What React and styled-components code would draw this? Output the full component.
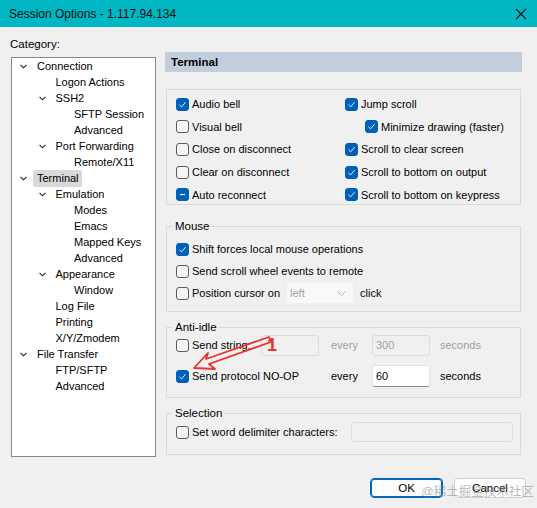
import React from 'react';
import styled, { createGlobalStyle } from 'styled-components';

const Global = createGlobalStyle`
    html, body {
        margin: 0;
        padding: 0;
        background: #f0f0f0;
    }
    * {
        box-sizing: border-box;
    }
`

const Window = styled.div`
    position: relative;
    width: 537px;
    height: 508px;
    display: flex;
    flex-direction: column;
    background: #f0f0f0;
    font-family: "Liberation Sans", Arial, sans-serif;
    font-size: 11px;
    color: #000;
    overflow: hidden;
`
const TitleBar = styled.div`
    height: 27px;
    flex: none;
    display: flex;
    align-items: center;
    justify-content: space-between;
    padding: 0 9px 0 9px;
    background: #00b7c3;
    color: #111;
    font-size: 12px;
`
const CloseX = styled.svg`
    width: 12px;
    height: 12px;
    margin-right: 1px;
`
const Body = styled.div`
    flex: 1;
    display: flex;
    flex-direction: column;
    padding: 9px 0 10px 10px;
`
const Main = styled.div`
    display: flex;
`
const LeftCol = styled.div`
    width: 146px;
    flex: none;
`
const Caption = styled.div`
    height: 16px;
    line-height: 16px;
    font-size: 11.5px;
`
const Tree = styled.div`
    margin: 5px 0 0 1px;
    width: 145px;
    height: 400px;
    background: #fff;
    border: 1px solid #828790;
`
const Node = styled.div`
    height: 16px;
    display: flex;
    align-items: center;
    padding-left: ${p => p.level * 18.5}px;
`
const Twist = styled.span`
    width: 25px;
    flex: none;
    display: flex;
    align-items: center;
    padding-left: 8px;
`
const NodeText = styled.span`
    margin-left: -4px;
    padding: 1px 3px 1px 4px;
    line-height: 15px;
    border-radius: 2px;
    background: ${p => (p.selected ? '#d9d9d9' : 'transparent')};
    white-space: nowrap;
`
const RightCol = styled.div`
    margin: 16px 0 0 9px;
    width: 357px;
    display: flex;
    flex-direction: column;
`
const Header = styled.div`
    height: 20px;
    line-height: 20px;
    padding-left: 6px;
    background: #c2cedb;
    font-weight: bold;
    font-size: 11.5px;
`
const Panel = styled.div`
    margin: 17px 0 0 1px;
    width: 355px;
    height: 116px;
    border: 1px solid #dadada;
    padding: 3px 0 0 9px;
    display: grid;
    grid-template-columns: 169px auto;
    grid-auto-rows: 22.6px;
`
const Group = styled.fieldset`
    margin: ${p => p.top}px 0 0 1px;
    width: 355px;
    border: 1px solid #dadada;
    padding: ${p => p.pad};
    padding-left: 9px;
    min-width: 0;
`
const Legend = styled.legend`
    margin-left: -3px;
    padding: 0 2px;
    line-height: 14px;
    font-size: 11.5px;
`
const Row = styled.div`
    display: flex;
    align-items: center;
    height: ${p => p.h || 22}px;
    padding-left: ${p => p.indent || 0}px;
    color: ${p => (p.dim ? '#a0a0a0' : '#000')};
    white-space: nowrap;
`
const Box = styled.span`
    width: 13px;
    height: 13px;
    flex: none;
    margin-right: 3px;
    border-radius: 3px;
    border: 1px solid ${p => (p.state ? '#005fb8' : '#5b5b5b')};
    background: ${p => (p.state ? '#005fb8' : '#f6f6f6')};
    display: flex;
    align-items: center;
    justify-content: center;
`
const Select = styled.div`
    width: 66px;
    height: 20px;
    margin: 0 7px 0 7px;
    background: #f9f9f9;
    border-radius: 3px;
    display: flex;
    align-items: center;
    justify-content: space-between;
    padding: 0 7px 0 3px;
    color: #a0a0a0;
`
const AntiRow = styled.div`
    display: grid;
    grid-template-columns: 85px 58px 53px 58px auto;
    align-items: center;
    height: 22px;
    margin-bottom: ${p => p.gap || 0}px;
`
const Field = styled.div`
    height: ${p => p.h || 21}px;
    width: ${p => p.w || 58}px;
    border: 1px solid ${p => (p.live ? '#e3e3e3' : '#dcdcdc')};
    border-bottom-color: ${p => (p.live ? '#8a8a8a' : '#dcdcdc')};
    border-radius: 3px;
    background: ${p => (p.live ? '#fff' : '#f0f0f0')};
    color: ${p => (p.live ? '#000' : '#a0a0a0')};
    padding-left: 3px;
    display: flex;
    align-items: center;
`
const Word = styled.span`
    padding-left: ${p => p.pl || 0}px;
    color: ${p => (p.dim ? '#a0a0a0' : '#000')};
    white-space: nowrap;
`
const Footer = styled.div`
    margin-top: auto;
    display: flex;
    justify-content: flex-end;
    gap: 11px;
    padding-right: 11px;
`
const Button = styled.div`
    width: ${p => p.w}px;
    height: 20px;
    border-radius: 4px;
    background: #fdfdfd;
    border: 1px solid ${p => (p.primary ? '#0067c0' : '#d0d0d0')};
    box-shadow: ${p => (p.primary ? 'inset 0 0 0 1px #0067c0' : 'none')};
    display: flex;
    align-items: center;
    justify-content: center;
    font-size: 11.5px;
`
const Watermark = styled.div`
    position: absolute;
    left: 421px;
    top: 481px;
    font-family: "Liberation Sans", "Noto Sans CJK SC", sans-serif;
    font-size: 12.5px;
    color: rgba(130, 130, 130, 0.55);
    white-space: nowrap;
    pointer-events: none;
`
const Mark = styled.svg`
    position: absolute;
    left: 185px;
    top: 328px;
    width: 100px;
    height: 48px;
    overflow: visible;
`

const Chevron = () => (
    <svg width="7" height="5" viewBox="0 0 7 5">
        <path d="M0.5 0.8 L3.5 3.8 L6.5 0.8" fill="none" stroke="#222" strokeWidth="1.1" />
    </svg>
)

const Check = ({ state }) => (
    <Box state={state}>
        {state === 'on' && (
            <svg width="9" height="9" viewBox="0 0 9 9">
                <path d="M1.5 4.8 L3.6 6.8 L7.6 2.2" fill="none" stroke="#fff" strokeWidth="0.9" />
            </svg>
        )}
        {state === 'mixed' && (
            <svg width="9" height="9" viewBox="0 0 9 9">
                <path d="M2 4.5 H7" stroke="#fff" strokeWidth="1.2" />
            </svg>
        )}
    </Box>
)

const tree = [
    [0, 'Connection', true],
    [1, 'Logon Actions'],
    [1, 'SSH2', true],
    [2, 'SFTP Session'],
    [2, 'Advanced'],
    [1, 'Port Forwarding', true],
    [2, 'Remote/X11'],
    [0, 'Terminal', true, true],
    [1, 'Emulation', true],
    [2, 'Modes'],
    [2, 'Emacs'],
    [2, 'Mapped Keys'],
    [2, 'Advanced'],
    [1, 'Appearance', true],
    [2, 'Window'],
    [1, 'Log File'],
    [1, 'Printing'],
    [1, 'X/Y/Zmodem'],
    [0, 'File Transfer', true],
    [1, 'FTP/SFTP'],
    [1, 'Advanced'],
]

const terminalOpts = [
    ['Audio bell', 'on'], ['Jump scroll', 'on'],
    ['Visual bell'], ['Minimize drawing (faster)', 'on', 20],
    ['Close on disconnect'], ['Scroll to clear screen', 'on'],
    ['Clear on disconnect'], ['Scroll to bottom on output', 'on'],
    ['Auto reconnect', 'mixed'], ['Scroll to bottom on keypress', 'on'],
]

const App = () => (
    <Window>
        <Global />
        <TitleBar>
            <span>Session Options - 1.117.94.134</span>
            <CloseX viewBox="0 0 12 12">
                <path d="M1 1 L11 11 M11 1 L1 11" stroke="#111" strokeWidth="1.1" />
            </CloseX>
        </TitleBar>
        <Body>
            <Main>
                <LeftCol>
                    <Caption>Category:</Caption>
                    <Tree>
                        {tree.map(([level, label, open, selected], i) => (
                            <Node key={i} level={level}>
                                <Twist>{open && <Chevron />}</Twist>
                                <NodeText selected={selected}>{label}</NodeText>
                            </Node>
                        ))}
                    </Tree>
                </LeftCol>
                <RightCol>
                    <Header>Terminal</Header>
                    <Panel>
                        {terminalOpts.map(([label, state, indent], i) => (
                            <Row key={i} h={22.6} indent={indent}>
                                <Check state={state} />
                                {label}
                            </Row>
                        ))}
                    </Panel>
                    <Group top={14} pad="5px 0 7px">
                        <Legend>Mouse</Legend>
                        <Row><Check state="on" />Shift forces local mouse operations</Row>
                        <Row><Check />Send scroll wheel events to remote</Row>
                        <Row>
                            <Check />Position cursor on
                            <Select>
                                <span>left</span>
                                <svg width="9" height="5" viewBox="0 0 9 5">
                                    <path d="M0.5 0.5 L4.5 4.5 L8.5 0.5" fill="none" stroke="#b0b0b0" strokeWidth="1" />
                                </svg>
                            </Select>
                            click
                        </Row>
                    </Group>
                    <Group top={8} pad="0 0 10px">
                        <Legend>Anti-idle</Legend>
                        <AntiRow gap={9}>
                            <Row><Check />Send string:</Row>
                            <Field />
                            <Word pl={12} dim>every</Word>
                            <Field>300</Field>
                            <Word pl={10} dim>seconds</Word>
                        </AntiRow>
                        <AntiRow>
                            <Row><Check state="on" />Send protocol NO-OP</Row>
                            <span />
                            <Word pl={12}>every</Word>
                            <Field live h={22}>60</Field>
                            <Word pl={10}>seconds</Word>
                        </AntiRow>
                    </Group>
                    <Group top={8} pad="1px 0 11px">
                        <Legend>Selection</Legend>
                        <Row>
                            <Check />Set word delimiter characters:
                            <Field w={162} h={20} style={{ marginLeft: 'auto', marginRight: 7 }} />
                        </Row>
                    </Group>
                </RightCol>
            </Main>
            <Footer>
                <Button primary w={73}>OK</Button>
                <Button w={72}>Cancel</Button>
            </Footer>
        </Body>
        <Watermark>@稀土掘金技术社区</Watermark>
        <Mark viewBox="0 0 100 48">
            <path d="M9 40 L23 25 L21 31 L84 9 L86 14 L24 36 L30 41 Z" fill="none" stroke="#e8342f" strokeWidth="1.8" strokeLinejoin="round" />
            <text x="82" y="23" fill="#e8342f" fontSize="18" fontWeight="bold" fontFamily="Liberation Sans, sans-serif">1</text>
        </Mark>
    </Window>
)

export default App;
